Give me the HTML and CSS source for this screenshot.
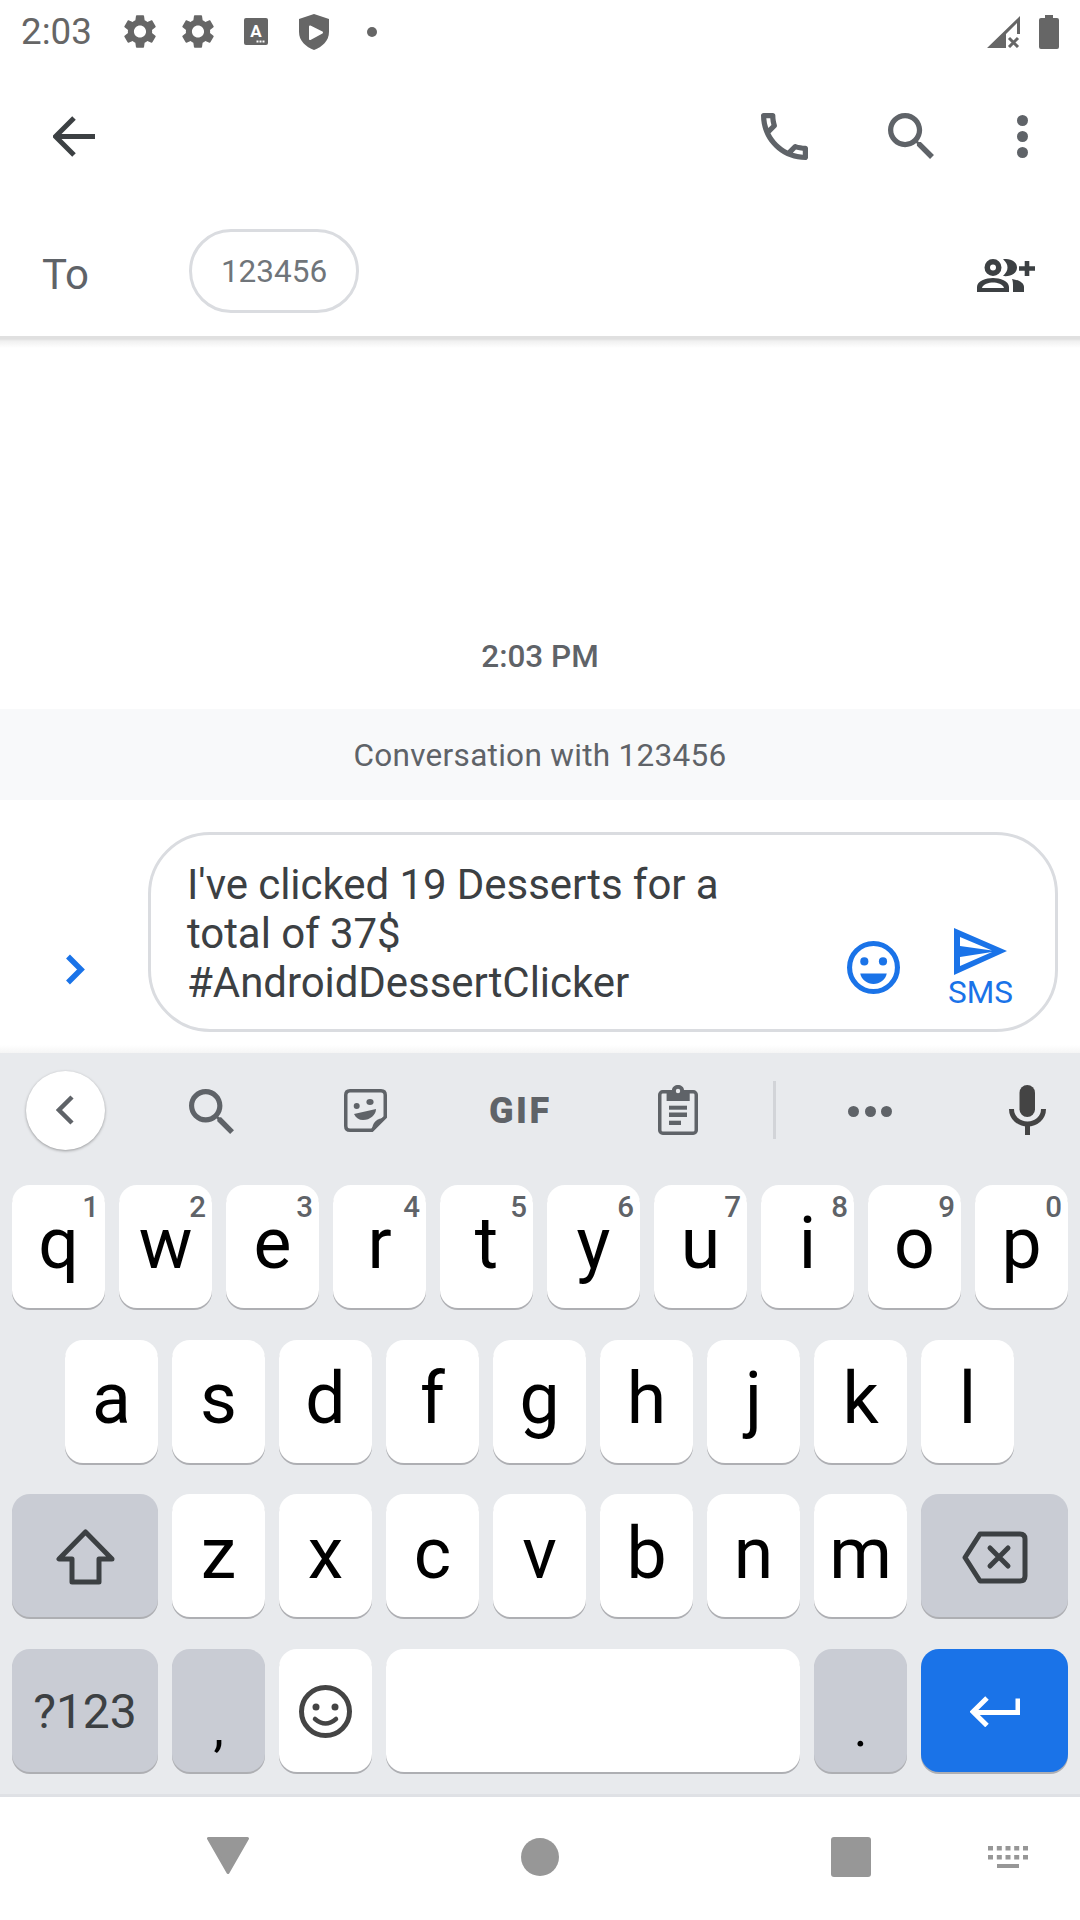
FILE: index.html
```html
<!DOCTYPE html>
<html lang="en">
<head>
  <meta charset="UTF-8">
  <meta name="viewport" content="width=device-width, initial-scale=1">
  <title>New conversation</title>
  <link rel="stylesheet" href="styles.css">
</head>
<body>
<div class="app">

  <!-- status bar -->
  <div class="status">
    <span class="status-time">2:03</span>
    <svg class="st-gear" viewBox="2.7 2.2 18.6 19.6"><path d="M19.14 12.94c.04-.3.06-.61.06-.94 0-.32-.02-.64-.07-.94l2.03-1.58c.18-.14.23-.41.12-.61l-1.92-3.32c-.12-.22-.37-.29-.59-.22l-2.39.96c-.5-.38-1.03-.7-1.62-.94l-.36-2.54c-.04-.24-.24-.41-.48-.41h-3.84c-.24 0-.43.17-.47.41l-.36 2.54c-.59.24-1.13.57-1.62.94l-2.39-.96c-.22-.08-.47 0-.59.22L2.74 8.87c-.12.21-.08.47.12.61l2.03 1.58c-.05.3-.09.63-.09.94s.02.64.07.94l-2.03 1.58c-.18.14-.23.41-.12.61l1.92 3.32c.12.22.37.29.59.22l2.39-.96c.5.38 1.03.7 1.62.94l.36 2.54c.05.24.24.41.48.41h3.84c.24 0 .44-.17.47-.41l.36-2.54c.59-.24 1.13-.56 1.62-.94l2.39.96c.22.08.47 0 .59-.22l1.92-3.32c.12-.22.07-.47-.12-.61l-2.01-1.58zM12 15.6c-1.98 0-3.6-1.62-3.6-3.6s1.62-3.6 3.6-3.6 3.6 1.62 3.6 3.6-1.62 3.6-3.6 3.6z"/></svg>
    <svg class="st-gear st-gear2" viewBox="2.7 2.2 18.6 19.6"><path d="M19.14 12.94c.04-.3.06-.61.06-.94 0-.32-.02-.64-.07-.94l2.03-1.58c.18-.14.23-.41.12-.61l-1.92-3.32c-.12-.22-.37-.29-.59-.22l-2.39.96c-.5-.38-1.03-.7-1.62-.94l-.36-2.54c-.04-.24-.24-.41-.48-.41h-3.84c-.24 0-.43.17-.47.41l-.36 2.54c-.59.24-1.13.57-1.62.94l-2.39-.96c-.22-.08-.47 0-.59.22L2.74 8.87c-.12.21-.08.47.12.61l2.03 1.58c-.05.3-.09.63-.09.94s.02.64.07.94l-2.03 1.58c-.18.14-.23.41-.12.61l1.92 3.32c.12.22.37.29.59.22l2.39-.96c.5.38 1.03.7 1.62.94l.36 2.54c.05.24.24.41.48.41h3.84c.24 0 .44-.17.47-.41l.36-2.54c.59-.24 1.13-.56 1.62-.94l2.39.96c.22.08.47 0 .59-.22l1.92-3.32c.12-.22.07-.47-.12-.61l-2.01-1.58zM12 15.6c-1.98 0-3.6-1.62-3.6-3.6s1.62-3.6 3.6-3.6 3.6 1.62 3.6 3.6-1.62 3.6-3.6 3.6z"/></svg>
    <svg class="st-a" viewBox="0 0 24 27">
      <rect width="24" height="27" rx="2"/>
      <text class="st-a-letter" x="12" y="19" text-anchor="middle">A</text>
      <rect class="st-white" x="12.5" y="22.5" width="2" height="2"/>
      <rect class="st-white" x="15.5" y="22.5" width="2" height="2"/>
      <rect class="st-white" x="18.5" y="22.5" width="2" height="2"/>
    </svg>
    <svg class="st-shield" viewBox="0 0 30 36">
      <path d="M15 0L30 5V18C30 27 23 33 15 36C7 33 0 27 0 18V5Z"/>
      <path class="st-white" d="M11 12.5L23 18.5L11 25Z" stroke="#fff" stroke-width="2" stroke-linejoin="round"/>
    </svg>
    <span class="st-dot"></span>
    <svg class="st-signal" viewBox="0 0 33 32">
      <path d="M0 32L33 0V18H30V7L19 18V32Z"/>
      <path d="M22 22L31 31M31 22L22 31" fill="none" stroke="#666" stroke-width="3"/>
    </svg>
    <svg class="st-battery" viewBox="0 0 20 34"><path d="M6 0H14V3H18Q20 3 20 5V32Q20 34 18 34H2Q0 34 0 32V5Q0 3 2 3H6Z"/></svg>
  </div>

  <!-- toolbar -->
  <div class="toolbar">
    <svg class="tb-back" viewBox="0 0 42 41"><path d="M42 20.5H4M21 2L2.5 20.5L21 39" fill="none" stroke="#3c4043" stroke-width="5"/></svg>
    <svg class="tb-call" viewBox="3 3 18 18"><path d="M6.54 5c.06.89.21 1.76.45 2.59l-1.2 1.2c-.41-1.2-.67-2.47-.76-3.79h1.51m9.86 12.02c.85.24 1.72.39 2.6.45v1.49c-1.32-.09-2.59-.35-3.8-.75l1.2-1.19M7.5 3H4c-.55 0-1 .45-1 1 0 9.39 7.61 17 17 17 .55 0 1-.45 1-1v-3.49c0-.55-.45-1-1-1-1.24 0-2.45-.2-3.57-.57-.1-.04-.21-.05-.31-.05-.26 0-.51.1-.71.29l-2.2 2.2c-2.83-1.45-5.15-3.76-6.59-6.59l2.2-2.2c.28-.28.36-.67.25-1.02C8.7 6.45 8.5 5.25 8.5 4c0-.55-.45-1-1-1z"/></svg>
    <svg class="tb-search" viewBox="3 3 17.5 17.5"><path d="M15.5 14h-.79l-.28-.27C15.41 12.59 16 11.11 16 9.5 16 5.91 13.09 3 9.5 3S3 5.91 3 9.5 5.91 16 9.5 16c1.61 0 3.09-.59 4.23-1.57l.27.28v.79l5 4.99L20.49 19l-4.99-5zm-6 0C7.01 14 5 11.99 5 9.5S7.01 5 9.5 5 14 7.01 14 9.5 11.99 14 9.5 14z"/></svg>
    <div class="tb-more"><span></span><span></span><span></span></div>
  </div>

  <!-- recipient -->
  <div class="to-row">
    <span class="to-label">To</span>
    <span class="to-chip">123456</span>
    <svg class="to-add" viewBox="0 0 59 33">
      <path fill-rule="evenodd" d="M16 0a8.5 8.5 0 1 0 0 17a8.5 8.5 0 1 0 0-17zM16 5.5a3 3 0 1 1 0 6a3 3 0 1 1 0-6z"/>
      <path fill-rule="evenodd" d="M0 33V28C0 22 9 19 16 19S32 22 32 28V33ZM5 29H27C26 25 20 23.5 16 23.5S6 25 5 29Z"/>
      <path d="M26 .3C34-1 40 3 40 8.5S34 18 26 17C29 14 30.5 11.5 30.5 8.5S29 3 26 .3Z"/>
      <path d="M35 20C42 21 47 24 47 28V33H36V28C36 25 36 22 35 20Z"/>
      <path d="M47.7 2H52.3V7.2H58V11.8H52.3V17H47.7V11.8H42V7.2H47.7Z"/>
    </svg>
  </div>

  <!-- conversation -->
  <div class="thread">
    <div class="thread-time">2:03 PM</div>
    <div class="thread-band">Conversation with 123456</div>
  </div>

  <!-- compose -->
  <div class="compose">
    <svg class="compose-more" viewBox="0 0 20 31"><path d="M3 2.5L16 15.5L3 28.5" fill="none" stroke="#1a73e8" stroke-width="5.5"/></svg>
    <div class="bubble">
      <div class="bubble-text">I've clicked 19 Desserts for a total of 37$ #AndroidDessertClicker</div>
      <svg class="bubble-emoji" viewBox="0 0 52 52">
        <circle cx="26" cy="26" r="23.5" fill="none" stroke="#1a73e8" stroke-width="5"/>
        <circle cx="17" cy="20" r="4"/>
        <circle cx="35.3" cy="20" r="4"/>
        <path d="M13 32H39C38 38 32 42.3 26 42.3S14 38 13 32Z"/>
      </svg>
      <div class="bubble-send">
        <svg class="send-icon" viewBox="0 0 53 47">
          <path fill-rule="evenodd" d="M0 0L53 23L0 47ZM6 9V18L38 22.5ZM6 29V38L38 24Z"/>
        </svg>
        <span class="send-label">SMS</span>
      </div>
    </div>
  </div>

  <!-- keyboard -->
  <div class="keyboard">
    <div class="strip">
      <div class="strip-back">
        <svg viewBox="0 0 18 30"><path d="M16 2L3 15L16 28" fill="none" stroke="#5f6368" stroke-width="4.5"/></svg>
      </div>
      <svg class="strip-search" viewBox="3 3 17.5 17.5"><path d="M15.5 14h-.79l-.28-.27C15.41 12.59 16 11.11 16 9.5 16 5.91 13.09 3 9.5 3S3 5.91 3 9.5 5.91 16 9.5 16c1.61 0 3.09-.59 4.23-1.57l.27.28v.79l5 4.99L20.49 19l-4.99-5zm-6 0C7.01 14 5 11.99 5 9.5S7.01 5 9.5 5 14 7.01 14 9.5 11.99 14 9.5 14z"/></svg>
      <svg class="strip-sticker" viewBox="0 0 43 43">
        <path d="M6 1.75H37Q41.25 1.75 41.25 6V28L28 41.25H6Q1.75 41.25 1.75 37V6Q1.75 1.75 6 1.75Z" fill="none" stroke="#5f6368" stroke-width="3.5"/>
        <path d="M41 29C33 29 28 33 28 42Z"/>
        <circle cx="12.7" cy="17" r="3"/>
        <ellipse cx="26" cy="13" rx="3.6" ry="3"/>
        <path d="M10 25L32 20C32 26 26 31 19 31C15 31 12 29 10 25Z"/>
      </svg>
      <span class="strip-gif">GIF</span>
      <svg class="strip-clip" viewBox="0 0 40 50">
        <rect x="1.75" y="6.75" width="36.5" height="41.5" rx="3" fill="none" stroke="#5f6368" stroke-width="3.5"/>
        <path d="M8.6 5H14C14 2 17 0 20 0S26 2 26 5H31.7V16H8.6Z"/>
        <circle class="strip-hole" cx="20" cy="6" r="2.2"/>
        <rect x="11" y="20.7" width="18" height="4"/>
        <rect x="11" y="27.5" width="18" height="4.5"/>
        <rect x="11" y="35.7" width="12" height="4.3"/>
      </svg>
      <span class="strip-sep"></span>
      <div class="strip-dots"><span></span><span></span><span></span></div>
      <svg class="strip-mic" viewBox="0 0 37 50">
        <rect x="10.5" y="0" width="15.5" height="32" rx="7.75"/>
        <path d="M2.5 24C2.5 33 10 39 18.5 39S34.5 33 34.5 24" fill="none" stroke="#444" stroke-width="5"/>
        <rect x="16" y="38" width="5" height="12"/>
      </svg>
    </div>

    <div class="keys">
      <div class="key-row">
        <div class="key">q<span class="hint">1</span></div>
        <div class="key">w<span class="hint">2</span></div>
        <div class="key">e<span class="hint">3</span></div>
        <div class="key">r<span class="hint">4</span></div>
        <div class="key">t<span class="hint">5</span></div>
        <div class="key">y<span class="hint">6</span></div>
        <div class="key">u<span class="hint">7</span></div>
        <div class="key">i<span class="hint">8</span></div>
        <div class="key">o<span class="hint">9</span></div>
        <div class="key">p<span class="hint">0</span></div>
      </div>
      <div class="key-row key-row-mid">
        <div class="key">a</div>
        <div class="key">s</div>
        <div class="key">d</div>
        <div class="key">f</div>
        <div class="key">g</div>
        <div class="key">h</div>
        <div class="key">j</div>
        <div class="key">k</div>
        <div class="key">l</div>
      </div>
      <div class="key-row">
        <div class="key key-wide key-fn">
          <svg class="ic-shift" viewBox="0 0 59 56"><path d="M29.5 3L3 30H16V53H43V30H56Z" fill="none" stroke="#3c4043" stroke-width="5" stroke-linejoin="round"/></svg>
        </div>
        <div class="key">z</div>
        <div class="key">x</div>
        <div class="key">c</div>
        <div class="key">v</div>
        <div class="key">b</div>
        <div class="key">n</div>
        <div class="key">m</div>
        <div class="key key-wide key-fn">
          <svg class="ic-back" viewBox="0 0 66 53">
            <path d="M18 3H58Q63 3 63 8V45Q63 50 58 50H18L3 26.5Z" fill="none" stroke="#3c4043" stroke-width="5" stroke-linejoin="round"/>
            <path d="M28 17L46 35M46 17L28 35" fill="none" stroke="#3c4043" stroke-width="5" stroke-linecap="round"/>
          </svg>
        </div>
      </div>
      <div class="key-row">
        <div class="key key-wide key-fn key-sym">?123</div>
        <div class="key key-fn key-punct">,</div>
        <div class="key">
          <svg class="ic-smile" viewBox="0 0 53 53">
            <circle cx="26.5" cy="26.5" r="24" fill="none" stroke="#444" stroke-width="5"/>
            <circle cx="17" cy="22" r="3.5"/>
            <circle cx="36" cy="22" r="3.5"/>
            <path d="M16 34Q26.5 43 37 34" fill="none" stroke="#444" stroke-width="4.5" stroke-linecap="round"/>
          </svg>
        </div>
        <div class="key key-space"></div>
        <div class="key key-fn key-punct">.</div>
        <div class="key key-wide key-enter">
          <svg class="ic-enter" viewBox="0 0 50 31"><path d="M48 2.5V16.5H5M17 2L3 15.8L17 29.5" fill="none" stroke="#fff" stroke-width="5"/></svg>
        </div>
      </div>
    </div>
  </div>

  <!-- navigation bar -->
  <div class="nav">
    <svg class="nav-back" viewBox="0 0 42 37"><path d="M1.5 1.5H40.5L21 35.5Z" stroke="#979797" stroke-width="3" stroke-linejoin="round"/></svg>
    <span class="nav-home"></span>
    <span class="nav-recent"></span>
    <svg class="nav-kbd" viewBox="0 0 40 22">
      <rect x="0" y="0" width="5" height="4.5"/><rect x="8.8" y="0" width="5" height="4.5"/><rect x="17.5" y="0" width="5" height="4.5"/><rect x="26.2" y="0" width="5" height="4.5"/><rect x="35" y="0" width="5" height="4.5"/>
      <rect x="0" y="9" width="5" height="4.5"/><rect x="8.8" y="9" width="5" height="4.5"/><rect x="17.5" y="9" width="5" height="4.5"/><rect x="26.2" y="9" width="5" height="4.5"/><rect x="35" y="9" width="5" height="4.5"/>
      <rect x="9" y="18" width="22" height="4"/>
    </svg>
  </div>

</div>
</body>
</html>
```

FILE: styles.css
```css
* {
  box-sizing: border-box;
}
body {
  margin: 0;
  background: #fff;
  font-family: Roboto, "Liberation Sans", sans-serif;
  color: #3c4043;
}
svg {
  display: block;
  flex: none;
}
.app {
  width: 1080px;
  height: 1920px;
  display: flex;
  flex-direction: column;
  overflow: hidden;
}

/* status bar */
.status {
  height: 63px;
  display: flex;
  align-items: center;
  padding-left: 21px;
  fill: #666;
}
.status-time {
  width: 103px;
  font-size: 36.75px;
  color: #666;
}
.st-gear {
  width: 32px;
  height: 33px;
}
.st-gear2 {
  margin-left: 26px;
}
.st-a {
  width: 24px;
  height: 27px;
  margin-left: 30px;
}
.st-a-letter {
  font-family: Roboto, sans-serif;
  font-size: 17px;
  font-weight: 700;
  fill: #fff;
}
.st-white {
  fill: #fff;
}
.st-shield {
  width: 30px;
  height: 36px;
  margin-left: 31px;
}
.st-dot {
  width: 10px;
  height: 10px;
  margin-left: 38px;
  border-radius: 50%;
  background: #666;
}
.st-signal {
  width: 33px;
  height: 32px;
  margin-left: auto;
}
.st-battery {
  width: 20px;
  height: 34px;
  margin-left: 19px;
  margin-right: 21px;
}

/* toolbar */
.toolbar {
  height: 146px;
  display: flex;
  align-items: center;
  padding-left: 53px;
  fill: #5f6368;
}
.tb-back {
  width: 42px;
  height: 41px;
}
.tb-call {
  width: 47px;
  height: 47px;
  margin-left: auto;
}
.tb-search {
  width: 46px;
  height: 46px;
  margin-left: 80px;
}
.tb-more {
  display: flex;
  flex-direction: column;
  gap: 5px;
  margin-left: 83px;
  margin-right: 52px;
}
.tb-more span {
  width: 11px;
  height: 11px;
  border-radius: 50%;
  background: #5f6368;
}

/* recipient */
.to-row {
  height: 127px;
  display: flex;
  align-items: center;
  padding-left: 42px;
  padding-right: 44px;
}
.to-label {
  width: 147px;
  margin-top: 3px;
  font-size: 42px;
  color: #5f6368;
}
.to-chip {
  width: 170px;
  height: 84px;
  margin-bottom: 3px;
  display: flex;
  align-items: center;
  justify-content: center;
  border: 3px solid #dadce0;
  border-radius: 42px;
  font-size: 31.5px;
  color: #70757a;
}
.to-add {
  width: 59px;
  height: 33px;
  margin-left: auto;
  margin-top: 5px;
  fill: #3c4043;
}

/* conversation */
.thread {
  flex: 1;
  display: flex;
  flex-direction: column;
  justify-content: flex-end;
  background: linear-gradient(#e0e0e0, #e0e0e0 3px, #f0f0f0 5px, #fff 12px) no-repeat top / 100% 12px;
}
.thread-time {
  margin-bottom: 32px;
  text-align: center;
  font-size: 31.5px;
  font-weight: 500;
  line-height: 40px;
  color: #5f6368;
}
.thread-band {
  height: 91px;
  display: flex;
  align-items: center;
  justify-content: center;
  padding-top: 2px;
  background: #f8f9fa;
  font-size: 31.5px;
  letter-spacing: .3px;
  color: #5f6368;
}

/* compose */
.compose {
  height: 253px;
  display: flex;
  align-items: flex-start;
  padding: 32px 22px 0 65px;
  background: linear-gradient(#fff, #fff 245px, #f5f5f5) no-repeat;
}
.compose-more {
  width: 20px;
  height: 31px;
  margin-top: 122px;
  margin-right: 63px;
}
.bubble {
  flex: 1;
  height: 200px;
  display: flex;
  align-items: flex-start;
  padding: 25px 0 0 36px;
  border: 3px solid #dadce0;
  border-radius: 62px;
  background: #fff;
  fill: #1a73e8;
}
.bubble-text {
  width: 560px;
  font-size: 42px;
  line-height: 49px;
  letter-spacing: -.06px;
}
.bubble-emoji {
  width: 53px;
  height: 53px;
  margin-top: 81px;
  margin-left: 100px;
}
.bubble-send {
  display: flex;
  flex-direction: column;
  align-items: center;
  margin-top: 68px;
  margin-left: 48px;
}
.send-icon {
  width: 53px;
  height: 47px;
}
.send-label {
  margin-top: 3px;
  font-size: 31.5px;
  line-height: 30px;
  color: #1a73e8;
}

/* keyboard */
.keyboard {
  flex: none;
  height: 744px;
  background: #e8eaed;
  border-bottom: 3px solid #dfe1e5;
}
.strip {
  height: 132px;
  padding: 0 0 18px 26px;
  display: flex;
  align-items: center;
  fill: #5f6368;
}
.strip-back {
  width: 79px;
  height: 79px;
  display: flex;
  align-items: center;
  justify-content: center;
  border-radius: 50%;
  background: #fff;
  box-shadow: 0 1px 3px rgba(0, 0, 0, .35);
}
.strip-back svg {
  width: 18px;
  height: 30px;
  margin-right: 2px;
}
.strip-search {
  width: 45px;
  height: 45px;
  margin-left: 84px;
  margin-top: 3px;
}
.strip-sticker {
  width: 43px;
  height: 43px;
  margin-left: 110px;
}
.strip-gif {
  width: 61px;
  margin-left: 102px;
  margin-top: 2px;
  font-size: 36px;
  font-weight: 900;
  letter-spacing: 2.5px;
  white-space: nowrap;
  color: #5f6368;
}
.strip-clip {
  width: 40px;
  height: 50px;
  margin-left: 108px;
}
.strip-hole {
  fill: #e8eaed;
}
.strip-sep {
  width: 3px;
  height: 58px;
  margin-left: 75px;
  background: #d2d4d8;
}
.strip-dots {
  display: flex;
  gap: 5.5px;
  margin-left: 72px;
  margin-top: 2px;
}
.strip-dots span {
  width: 11px;
  height: 11px;
  border-radius: 50%;
  background: #5f6368;
}
.strip-mic {
  width: 37px;
  height: 50px;
  margin-left: 117px;
  fill: #444;
}

.keys {
  display: flex;
  flex-direction: column;
  gap: 31.67px;
  padding: 0 12px;
}
.key-row {
  display: flex;
  gap: 14px;
}
.key-row-mid {
  padding-left: 53px;
}
.key {
  position: relative;
  width: 93px;
  height: 123px;
  display: flex;
  align-items: center;
  justify-content: center;
  padding-bottom: 5px;
  border-radius: 18px;
  background: #fff;
  box-shadow: 0 2px 0 #aeafb3;
  font-size: 71.5px;
  line-height: 1;
  color: #000;
}
.key-wide {
  width: 146px;
  padding-bottom: 0;
}
.key-row > .key-wide:last-child {
  width: 147px;
}
.key-fn {
  background: #c9ccd4;
}
.key-enter {
  background: #1a73e8;
}
.key-space {
  width: 414px;
}
.key-sym {
  padding-top: 3px;
  font-size: 48px;
  color: #3c4043;
}
.key-punct {
  align-items: flex-end;
  padding-bottom: 17px;
  font-size: 52px;
}
.hint {
  position: absolute;
  top: 6px;
  right: 6px;
  font-size: 29.5px;
  font-weight: 500;
  line-height: 33px;
  color: #5f6368;
}
.ic-shift {
  width: 59px;
  height: 56px;
  margin-top: 2px;
}
.ic-back {
  width: 66px;
  height: 53px;
  margin-top: 3px;
}
.ic-smile {
  width: 53px;
  height: 53px;
  fill: #444;
  margin-top: 7px;
}
.ic-enter {
  width: 50px;
  height: 31px;
  margin-top: 3px;
}

/* navigation bar */
.nav {
  flex: none;
  height: 123px;
  display: flex;
  align-items: center;
  padding: 0 0 3px 207px;
  fill: #979797;
}
.nav-back {
  width: 42px;
  height: 37px;
  margin-top: -4px;
}
.nav-home {
  width: 38px;
  height: 38px;
  margin-left: 272px;
  border-radius: 50%;
  background: #979797;
}
.nav-recent {
  width: 40px;
  height: 40px;
  margin-left: 272px;
  border-radius: 3px;
  background: #979797;
}
.nav-kbd {
  width: 40px;
  height: 22px;
  margin-left: 117px;
}
```
